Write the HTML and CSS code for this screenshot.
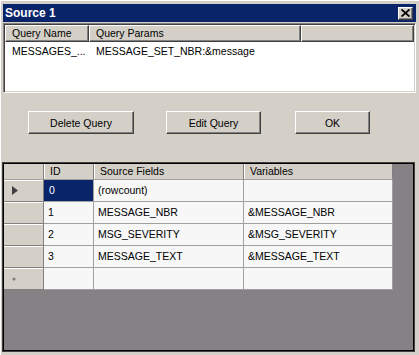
FILE: index.html
```html
<!DOCTYPE html>
<html lang="en">
<head>
    <meta charset="UTF-8">
    <title>Source 1</title>
    <link rel="stylesheet" href="styles.css">
</head>
<body>

    <div class="window">
        <div class="titlebar">
            <span class="title">Source 1</span>
            <button class="close" title="Close">
                <svg width="9" height="8" viewBox="0 0 9 8">
                    <path d="M0.5 0.5 L8.5 7.5 M8.5 0.5 L0.5 7.5" stroke="#000" stroke-width="1.8" fill="none"/>
                </svg>
            </button>
        </div>

        <div class="listview">
            <div class="lv-header">
                <div class="lv-col col-name">Query Name</div>
                <div class="lv-col col-params">Query Params</div>
                <div class="lv-col col-rest"></div>
            </div>
            <div class="lv-row">
                <div class="lv-cell col-name">MESSAGES_...</div>
                <div class="lv-cell col-params">MESSAGE_SET_NBR:&amp;message</div>
            </div>
        </div>

        <div class="actions">
            <button class="btn btn-delete">Delete Query</button>
            <button class="btn btn-edit">Edit Query</button>
            <button class="btn btn-ok">OK</button>
        </div>

        <div class="datagrid">
            <div class="dg-table">
                <div class="dg-head dg-corner"></div>
                <div class="dg-head">ID</div>
                <div class="dg-head">Source Fields</div>
                <div class="dg-head">Variables</div>

                <div class="dg-rowhead">
                    <svg width="6" height="9" viewBox="0 0 6 9"><path d="M0 0 L6 4.5 L0 9 Z" fill="#404040"/></svg>
                </div>
                <div class="dg-cell selected">0</div>
                <div class="dg-cell">(rowcount)</div>
                <div class="dg-cell"></div>

                <div class="dg-rowhead"></div>
                <div class="dg-cell">1</div>
                <div class="dg-cell">MESSAGE_NBR</div>
                <div class="dg-cell">&amp;MESSAGE_NBR</div>

                <div class="dg-rowhead"></div>
                <div class="dg-cell">2</div>
                <div class="dg-cell">MSG_SEVERITY</div>
                <div class="dg-cell">&amp;MSG_SEVERITY</div>

                <div class="dg-rowhead"></div>
                <div class="dg-cell">3</div>
                <div class="dg-cell">MESSAGE_TEXT</div>
                <div class="dg-cell">&amp;MESSAGE_TEXT</div>

                <div class="dg-rowhead">
                    <svg width="4" height="4" viewBox="0 0 4 4"><circle cx="2" cy="2" r="1.6" fill="#808080"/></svg>
                </div>
                <div class="dg-cell"></div>
                <div class="dg-cell"></div>
                <div class="dg-cell"></div>
            </div>
        </div>
    </div>

</body>
</html>
```

FILE: styles.css
```css
/* Basic Reset */
* {
    margin: 0;
    padding: 0;
    box-sizing: border-box;
    font-family: "Liberation Sans", Arial, sans-serif;
}

body {
    background: #d4d0c8;
    font-size: 10.5px;
    color: #000;
}

.window {
    width: 419px;
    height: 355px;
    padding: 4px 3px 0;
    background: #d4d0c8;
    box-shadow: inset 1px 1px 0 #fff;
}

/* Title bar */
.titlebar {
    height: 18px;
    background: #0a246a;
    display: flex;
    align-items: center;
    justify-content: space-between;
    padding: 0 3px 0 2px;
}

.title {
    color: #fff;
    font-weight: bold;
    font-size: 12px;
}

.close {
    width: 15px;
    height: 13px;
    display: flex;
    align-items: center;
    justify-content: center;
    background: #d4d0c8;
    border: 1px solid;
    border-color: #fff #404040 #404040 #fff;
    box-shadow: inset -1px -1px 0 #808080;
}

/* List view */
.listview {
    margin-top: 1px;
    height: 70px;
    background: #fff;
    border: 1px solid;
    border-color: #808080 #fff #fff #808080;
    box-shadow: inset 1px 1px 0 #404040, inset -1px -1px 0 #d4d0c8;
    padding: 1px 1px 0 1px;
}

.lv-header {
    display: flex;
    height: 17px;
}

.lv-col {
    height: 17px;
    line-height: 15px;
    padding-left: 6px;
    background: #d4d0c8;
    border: 1px solid;
    border-color: #fff #404040 #404040 #fff;
    box-shadow: inset -1px -1px 0 #808080;
    white-space: nowrap;
}

.lv-row {
    display: flex;
    height: 16px;
    line-height: 16px;
    margin-top: 1px;
}

.lv-cell {
    padding-left: 7px;
    white-space: nowrap;
}

.col-name {
    width: 84px;
}

.col-params {
    width: 212px;
}

.col-rest {
    flex: 1;
}

/* Buttons */
.actions {
    margin-top: 18px;
    padding-left: 25px;
    display: flex;
    height: 23px;
}

.btn {
    height: 23px;
    font-size: 10.5px;
    background: #d4d0c8;
    border: 1px solid;
    border-color: #fff #404040 #404040 #fff;
    box-shadow: inset -1px -1px 0 #808080;
}

.btn-delete {
    width: 106px;
}

.btn-edit {
    width: 95px;
    margin-left: 32px;
}

.btn-ok {
    width: 75px;
    margin-left: 34px;
}

/* Data grid */
.datagrid {
    margin: 28px 0 0 -1px;
    width: 413px;
    height: 190px;
    background: #848284;
    border: 1px solid #404040;
    box-shadow: inset 0 0 0 1px #000;
    padding: 1px;
}

.dg-table {
    display: grid;
    grid-template-columns: 40px 50px 150px 149px;
    grid-template-rows: 16px repeat(5, 22px);
    width: 389px;
}

.dg-head {
    background: #d4d0c8;
    border-right: 1px solid #808080;
    border-bottom: 1px solid #a0a0a0;
    box-shadow: inset 1px 0 0 #fff;
    padding-left: 6px;
    line-height: 15px;
    white-space: nowrap;
}

.dg-corner {
    box-shadow: none;
}

.dg-rowhead {
    background: #d4d0c8;
    border-right: 1px solid #808080;
    border-bottom: 1px solid #808080;
    box-shadow: inset 0 1px 0 #fff;
    display: flex;
    align-items: center;
    padding-left: 8px;
}

.dg-cell {
    background: #f7f7f7;
    border-right: 1px solid #a0a0a0;
    border-bottom: 1px solid #a0a0a0;
    padding-left: 4px;
    line-height: 21px;
    white-space: nowrap;
}

.dg-cell.selected {
    background: #0a246a;
    color: #fff;
    padding-left: 5px;
}
```
